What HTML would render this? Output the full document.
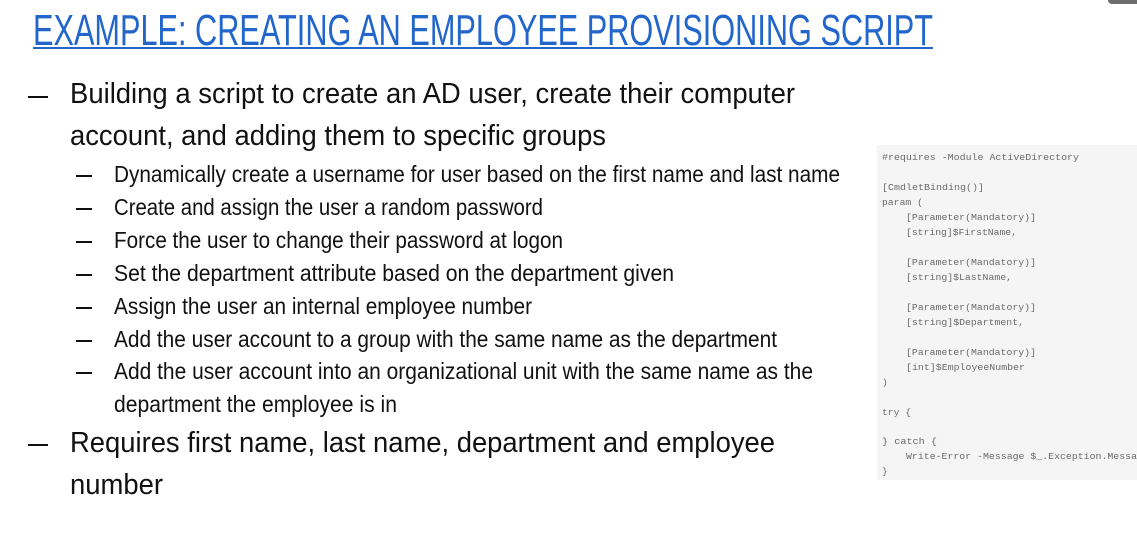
<!DOCTYPE html>
<html><head><meta charset="utf-8"><style>
html,body{margin:0;padding:0;background:#fff;width:1137px;height:550px;overflow:hidden}
svg{display:block}
.t{font-family:"Liberation Sans",sans-serif;fill:#111}
.c{font-family:"Liberation Mono",monospace;font-size:9.5px;fill:#6a6a6a}
</style></head><body>
<svg width="1137" height="550" xmlns="http://www.w3.org/2000/svg">
<rect x="1108" y="-6" width="40" height="10" rx="4" fill="#6b6b6b"/>
<text class="t" x="33" y="45" font-size="44" style="fill:#2266cc" textLength="900" lengthAdjust="spacingAndGlyphs">EXAMPLE: CREATING AN EMPLOYEE PROVISIONING SCRIPT</text>
<rect x="33" y="47" width="900" height="2" fill="#2266cc"/>

<rect x="28" y="96" width="20" height="2" fill="#111"/>
<text class="t" x="70" y="103" font-size="29" textLength="725" lengthAdjust="spacingAndGlyphs">Building a script to create an AD user, create their computer</text>
<text class="t" x="70" y="145" font-size="29" textLength="536" lengthAdjust="spacingAndGlyphs">account, and adding them to specific groups</text>

<g fill="#111">
<rect x="76" y="175" width="16" height="2"/>
<rect x="76" y="208" width="16" height="2"/>
<rect x="76" y="241" width="16" height="2"/>
<rect x="76" y="274" width="16" height="2"/>
<rect x="76" y="307" width="16" height="2"/>
<rect x="76" y="340" width="16" height="2"/>
<rect x="76" y="372" width="16" height="2"/>
</g>
<g class="t" font-size="23">
<text class="t" x="114" y="182" textLength="726" lengthAdjust="spacingAndGlyphs">Dynamically create a username for user based on the first name and last name</text>
<text class="t" x="114" y="215" textLength="429" lengthAdjust="spacingAndGlyphs">Create and assign the user a random password</text>
<text class="t" x="114" y="248" textLength="449" lengthAdjust="spacingAndGlyphs">Force the user to change their password at logon</text>
<text class="t" x="114" y="281" textLength="560" lengthAdjust="spacingAndGlyphs">Set the department attribute based on the department given</text>
<text class="t" x="114" y="314" textLength="418" lengthAdjust="spacingAndGlyphs">Assign the user an internal employee number</text>
<text class="t" x="114" y="347" textLength="663" lengthAdjust="spacingAndGlyphs">Add the user account to a group with the same name as the department</text>
<text class="t" x="114" y="379" textLength="699" lengthAdjust="spacingAndGlyphs">Add the user account into an organizational unit with the same name as the</text>
<text class="t" x="114" y="412" textLength="283" lengthAdjust="spacingAndGlyphs">department the employee is in</text>
</g>

<rect x="28" y="444" width="20" height="2" fill="#111"/>
<text class="t" x="70" y="452" font-size="29" textLength="705" lengthAdjust="spacingAndGlyphs">Requires first name, last name, department and employee</text>
<text class="t" x="70" y="494" font-size="29" textLength="93" lengthAdjust="spacingAndGlyphs">number</text>

<rect x="877" y="145" width="260" height="335" fill="#f5f5f5"/>
<text class="c" x="882" y="160" textLength="197" lengthAdjust="spacingAndGlyphs">#requires -Module ActiveDirectory</text>
<text class="c" x="882" y="190" textLength="102" lengthAdjust="spacingAndGlyphs">[CmdletBinding()]</text>
<text class="c" x="882" y="205" textLength="41" lengthAdjust="spacingAndGlyphs">param (</text>
<text class="c" x="906" y="220" textLength="130" lengthAdjust="spacingAndGlyphs">[Parameter(Mandatory)]</text>
<text class="c" x="906" y="235" textLength="111" lengthAdjust="spacingAndGlyphs">[string]$FirstName,</text>
<text class="c" x="906" y="265" textLength="130" lengthAdjust="spacingAndGlyphs">[Parameter(Mandatory)]</text>
<text class="c" x="906" y="280" textLength="106" lengthAdjust="spacingAndGlyphs">[string]$LastName,</text>
<text class="c" x="906" y="310" textLength="130" lengthAdjust="spacingAndGlyphs">[Parameter(Mandatory)]</text>
<text class="c" x="906" y="325" textLength="118" lengthAdjust="spacingAndGlyphs">[string]$Department,</text>
<text class="c" x="906" y="355" textLength="130" lengthAdjust="spacingAndGlyphs">[Parameter(Mandatory)]</text>
<text class="c" x="906" y="370" textLength="119" lengthAdjust="spacingAndGlyphs">[int]$EmployeeNumber</text>
<text class="c" x="882" y="385">)</text>
<text class="c" x="882" y="415" textLength="29" lengthAdjust="spacingAndGlyphs">try {</text>
<text class="c" x="882" y="444" textLength="55" lengthAdjust="spacingAndGlyphs">} catch {</text>
<text class="c" x="906" y="459" textLength="231" lengthAdjust="spacingAndGlyphs">Write-Error -Message $_.Exception.Messa</text>
<text class="c" x="882" y="474">}</text>
</svg>
</body></html>
